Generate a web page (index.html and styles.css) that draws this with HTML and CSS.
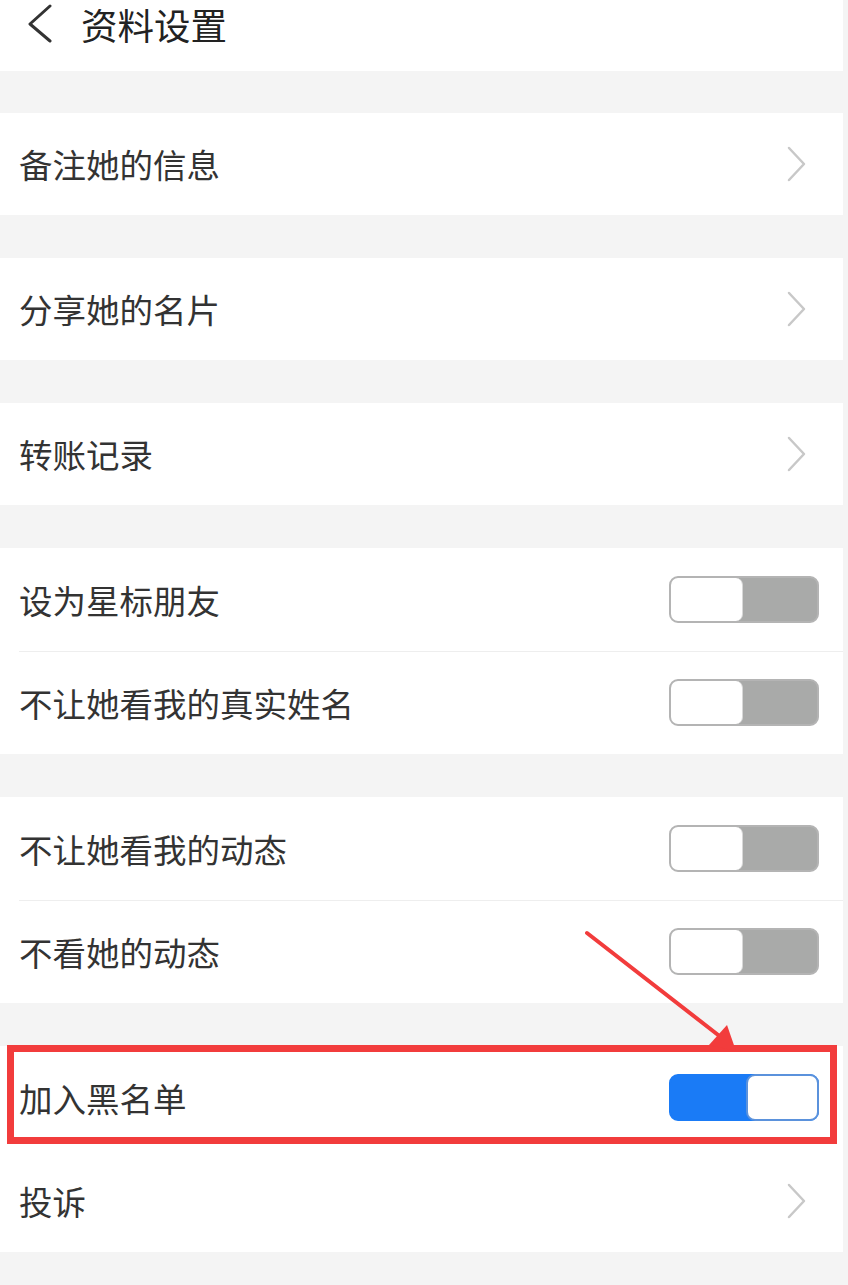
FILE: index.html
```html
<!DOCTYPE html>
<html lang="zh-CN">
<head>
<meta charset="utf-8">
<title>资料设置</title>
<link rel="stylesheet" href="styles.css">
</head>
<body>
<div class="page">
  <header class="topbar">
    <svg class="back" width="30" height="40" viewBox="0 0 30 40"><polyline points="22,7 2,25 22,42" transform="translate(0,-4)" fill="none" stroke="#333" stroke-width="3" stroke-linecap="round" stroke-linejoin="round"/></svg>
    <h1 class="title">资料设置</h1>
  </header>

  <section class="group">
    <div class="row"><span class="label">备注她的信息</span><svg class="chev" width="22" height="36" viewBox="0 0 22 36"><polyline points="3,2 18,18 3,34" fill="none" stroke="#c8c8c8" stroke-width="2.5" stroke-linecap="round" stroke-linejoin="round"/></svg></div>
  </section>

  <section class="group">
    <div class="row"><span class="label">分享她的名片</span><svg class="chev" width="22" height="36" viewBox="0 0 22 36"><polyline points="3,2 18,18 3,34" fill="none" stroke="#c8c8c8" stroke-width="2.5" stroke-linecap="round" stroke-linejoin="round"/></svg></div>
  </section>

  <section class="group">
    <div class="row"><span class="label">转账记录</span><svg class="chev" width="22" height="36" viewBox="0 0 22 36"><polyline points="3,2 18,18 3,34" fill="none" stroke="#c8c8c8" stroke-width="2.5" stroke-linecap="round" stroke-linejoin="round"/></svg></div>
  </section>

  <section class="group">
    <div class="row tall"><span class="label">设为星标朋友</span><span class="switch"><span class="knob"></span></span></div>
    <div class="row tall divided"><span class="label">不让她看我的真实姓名</span><span class="switch"><span class="knob"></span></span></div>
  </section>

  <section class="group">
    <div class="row tall"><span class="label">不让她看我的动态</span><span class="switch"><span class="knob"></span></span></div>
    <div class="row tall divided"><span class="label">不看她的动态</span><span class="switch"><span class="knob"></span></span></div>
  </section>

  <section class="group last">
    <div class="row tall marked"><span class="label">加入黑名单</span><span class="switch on"><span class="knob"></span></span><span class="highlight"></span></div>
    <div class="row tall"><span class="label">投诉</span><svg class="chev" width="22" height="36" viewBox="0 0 22 36"><polyline points="3,2 18,18 3,34" fill="none" stroke="#c8c8c8" stroke-width="2.5" stroke-linecap="round" stroke-linejoin="round"/></svg></div>
  </section>
</div>

<svg class="arrow" width="848" height="1285" viewBox="0 0 848 1285">
  <line x1="587" y1="933" x2="722" y2="1038" stroke="#f23c3c" stroke-width="4" stroke-linecap="round"/>
  <polygon points="736,1051 709,1045 727,1025" fill="#f23c3c"/>
</svg>
</body>
</html>
```

FILE: styles.css
```css
html, body {
  margin: 0;
  padding: 0;
}

body {
  background: #f4f4f4;
  font-family: "Noto Sans CJK SC", "Noto Sans", sans-serif;
  color: #333;
  position: relative;
  width: 848px;
  height: 1285px;
  overflow: hidden;
}

.page {
  width: 843px;
}

.topbar {
  height: 71px;
  background: #fff;
  display: flex;
  align-items: flex-start;
  padding-left: 28px;
  box-sizing: border-box;
}

.back {
  margin-top: 3px;
  display: block;
}

.title {
  margin: 0 0 0 23px;
  font-size: 36.5px;
  font-weight: 400;
  line-height: 50px;
  color: #222;
}

.group {
  margin-top: 43px;
  background: #fff;
}

.group:first-of-type {
  margin-top: 42px;
}

.row {
  height: 102px;
  display: flex;
  align-items: center;
  justify-content: space-between;
  padding-left: 19px;
  padding-right: 24px;
  box-sizing: border-box;
  position: relative;
}

.row .chev {
  margin-right: 11px;
  display: block;
}

.row.tall {
  height: 103px;
}

.row.divided::after {
  content: "";
  position: absolute;
  left: 19px;
  right: 0;
  top: 0;
  height: 1px;
  background: #eeeeee;
}

.label {
  font-size: 33.5px;
  line-height: 1;
  color: #333;
}

.switch {
  width: 150px;
  height: 47px;
  box-sizing: border-box;
  border: 2px solid #b4b4b4;
  border-radius: 9px;
  background: #a9aaa9;
  display: flex;
  justify-content: flex-start;
}

.knob {
  width: 72px;
  height: 100%;
  background: #fff;
  border-radius: 7px;
  box-sizing: border-box;
  border-right: 1px solid #d8d8d8;
}

.switch.on {
  background: #1a7bf6;
  border-color: #1a7bf6;
  justify-content: flex-end;
}

.switch.on .knob {
  width: 73px;
  border: 2px solid #5b92dc;
  margin: -2px -2px -2px 0;
  height: calc(100% + 4px);
  border-radius: 9px;
}

.highlight {
  position: absolute;
  left: 7px;
  right: 6px;
  top: -1px;
  height: 99px;
  border: 7px solid #f23c3c;
  box-sizing: border-box;
  pointer-events: none;
}

.arrow {
  position: absolute;
  left: 0;
  top: 0;
  pointer-events: none;
}
```
